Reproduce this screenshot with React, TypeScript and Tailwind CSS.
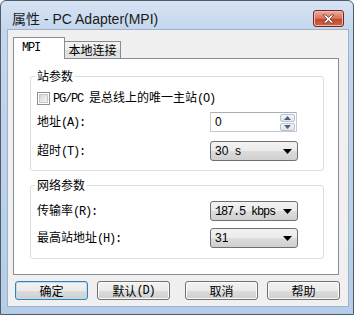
import React from 'react';

// 宋体 look: CJK in Noto Sans CJK, ASCII runs in a squeezed mono
const T: React.FC<{ s: string }> = ({ s }) => (
  <>
    {s
      .split(/([\x20-\x7e]+)/)
      .filter(Boolean)
      .map((p, i) =>
        /^[\x20-\x7e]+$/.test(p) ? (
          <span key={i} className="font-['Liberation_Mono',monospace] tracking-[-1.2px] whitespace-pre">
            {p}
          </span>
        ) : (
          <span key={i} className="font-['Noto_Sans_CJK_SC',sans-serif]">
            {p}
          </span>
        )
      )}
  </>
);

const Arrow = () => (
  <svg width="9" height="5" viewBox="0 0 9 5">
    <path d="M0 0h9L4.5 5z" fill="#000" />
  </svg>
);

const Combo: React.FC<{ children: React.ReactNode }> = ({ children }) => (
  <div className="w-[88px] h-[20px] flex items-center justify-between pl-[4px] pr-[5px] border border-[#707070] rounded-[3px] bg-[linear-gradient(#f2f2f2,#ebebeb_50%,#dddddd_50%,#cfcfcf)] text-[12px] leading-[14px] text-black">
    <span>{children}</span>
    <Arrow />
  </div>
);

const SpinBtn = ({ up }: { up?: boolean }) => (
  <div className="h-[8px] w-[15px] flex items-center justify-center border border-[#b7c3d1] rounded-[2px] bg-[linear-gradient(#f4f6f8,#dfe5ec)]">
    <svg width="7" height="4" viewBox="0 0 7 4">
      <path d={up ? 'M0 4h7L3.5 0z' : 'M0 0h7L3.5 4z'} fill="#4d6185" />
    </svg>
  </div>
);

const Btn: React.FC<{ children: React.ReactNode; def?: boolean; cls: string }> = ({ children, def, cls }) => (
  <div
    className={`${cls} w-[73px] h-[19px] flex items-center justify-center rounded-[3px] border text-[12px] leading-[14px] text-black bg-[linear-gradient(#f2f2f2,#ebebeb_50%,#dddddd_50%,#cfcfcf)] ${
      def ? 'border-[#3c7fb1] shadow-[inset_0_0_0_1px_#b6def5]' : 'border-[#707070] shadow-[inset_0_0_0_1px_#fbfbfb]'
    }`}
  >
    {children}
  </div>
);

export default function App() {
  return (
    <div className="w-[354px] h-[315px] overflow-hidden bg-white">
      <div className="w-full h-full flex flex-col rounded-t-[6px] border border-[#4f5b69] bg-[linear-gradient(#d5e3f3,#c3d7ed_30px,#b5cde8)] pl-[6px] pr-[4px] pb-[7px]">
        {/* 标题栏 */}
        <div className="h-[28px] shrink-0 flex justify-between">
          <span className="pl-[5px] pt-[9px] text-[14px] leading-[18px] text-[#1b1b1b] font-['Liberation_Sans','Noto_Sans_CJK_SC',sans-serif]">
            属性 - PC Adapter(MPI)
          </span>
          <div className="mt-[9px] mr-[5px] w-[31px] h-[17px] flex items-center justify-center rounded-[3px] border border-[#6e2a1f] bg-[linear-gradient(#eab0a2,#d7705b_50%,#c5462e_55%,#d0664c)] shadow-[inset_0_0_0_1px_#f1b8aa]">
            <svg width="13" height="10" viewBox="0 0 13 10">
              <path
                d="M1 1h3l2.5 2.5L9 1h3L8 5l4 4H9L6.5 6.5 4 9H1l4-4z"
                fill="#fff"
                stroke="#6b3a33"
                strokeWidth="0.8"
              />
            </svg>
          </div>
        </div>

        {/* 客户区 */}
        <div className="flex-1 flex flex-col bg-[#f0f0f0] border border-[#9fb2c9] pl-[5px]">
          <div className="mt-[7px] w-[326px] flex flex-col">
            {/* 选项卡 */}
            <div className="flex items-end h-[21px]">
              <div className="relative z-10 -mb-px h-[22px] w-[52px] pl-[8px] pt-[2px] bg-white border border-b-0 border-[#898c95] text-[12px] leading-[14px]">
                <T s="MPI" />
              </div>
              <div className="h-[17px] w-[56px] flex items-center justify-center border border-l-0 border-b-0 border-[#898c95] bg-[linear-gradient(#f3f3f3,#ebebeb_50%,#dddddd_50%,#e5e5e5)] text-[12px] leading-[14px]">
                <T s="本地连接" />
              </div>
            </div>

            {/* 面板 */}
            <div className="h-[217px] bg-white border border-[#898c95] pt-[10px] pl-[16px] text-[12px] leading-[14px] text-black">
              <fieldset className="w-[294px] border border-[#d5dfe5] rounded-[3px] pb-[9px]">
                <legend className="ml-[4px] px-[2px] leading-[14px]">
                  <T s="站参数" />
                </legend>
                <div className="pl-[6px] flex flex-col">
                  <div className="mt-[7px] h-[14px] flex items-center">
                    <div className="w-[13px] h-[13px] border border-[#8e8f8f] p-[1px] bg-white">
                      <div className="w-full h-full bg-[linear-gradient(135deg,#d6d6d6,#f5f5f5)] border border-[#c8c8c8]" />
                    </div>
                    <span className="ml-[3px]">
                      <T s="PG/PC 是总线上的唯一主站(O)" />
                    </span>
                  </div>
                  <div className="mt-[7px] h-[20px] flex items-center">
                    <span className="w-[173px]">
                      <T s="地址(A):" />
                    </span>
                    <div className="w-[87px] h-[20px] flex items-center justify-between border border-[#c5cad2] border-t-[#abadb3] bg-white pl-[4px] pr-[1px]">
                      <span className="font-['Liberation_Sans',sans-serif] text-[12px]">0</span>
                      <div className="flex flex-col gap-px">
                        <SpinBtn up />
                        <SpinBtn />
                      </div>
                    </div>
                  </div>
                  <div className="mt-[9px] h-[20px] flex items-center">
                    <span className="w-[173px]">
                      <T s="超时(T):" />
                    </span>
                    <Combo>
                      <span className="font-['Liberation_Sans',sans-serif] whitespace-pre">30  s</span>
                    </Combo>
                  </div>
                </div>
              </fieldset>

              <fieldset className="mt-[7px] w-[294px] border border-[#d5dfe5] rounded-[3px] pb-[10px]">
                <legend className="ml-[4px] px-[2px] leading-[14px]">
                  <T s="网络参数" />
                </legend>
                <div className="pl-[6px] flex flex-col">
                  <div className="mt-[8px] h-[20px] flex items-center">
                    <span className="w-[173px]">
                      <T s="传输率(R):" />
                    </span>
                    <Combo>
                      <T s="187.5 kbps" />
                    </Combo>
                  </div>
                  <div className="mt-[7px] h-[20px] flex items-center">
                    <span className="w-[173px]">
                      <T s="最高站地址(H):" />
                    </span>
                    <Combo>
                      <span className="font-['Liberation_Sans',sans-serif]">31</span>
                    </Combo>
                  </div>
                </div>
              </fieldset>
            </div>
          </div>

          {/* 按钮 */}
          <div className="mt-[6px] flex">
            <Btn def cls="ml-[2px]">
              <T s="确定" />
            </Btn>
            <Btn cls="ml-[9px]">
              <T s="默认(D)" />
            </Btn>
            <Btn cls="ml-[15px]">
              <T s="取消" />
            </Btn>
            <Btn cls="ml-[9px]">
              <T s="帮助" />
            </Btn>
          </div>
        </div>
      </div>
    </div>
  );
}
